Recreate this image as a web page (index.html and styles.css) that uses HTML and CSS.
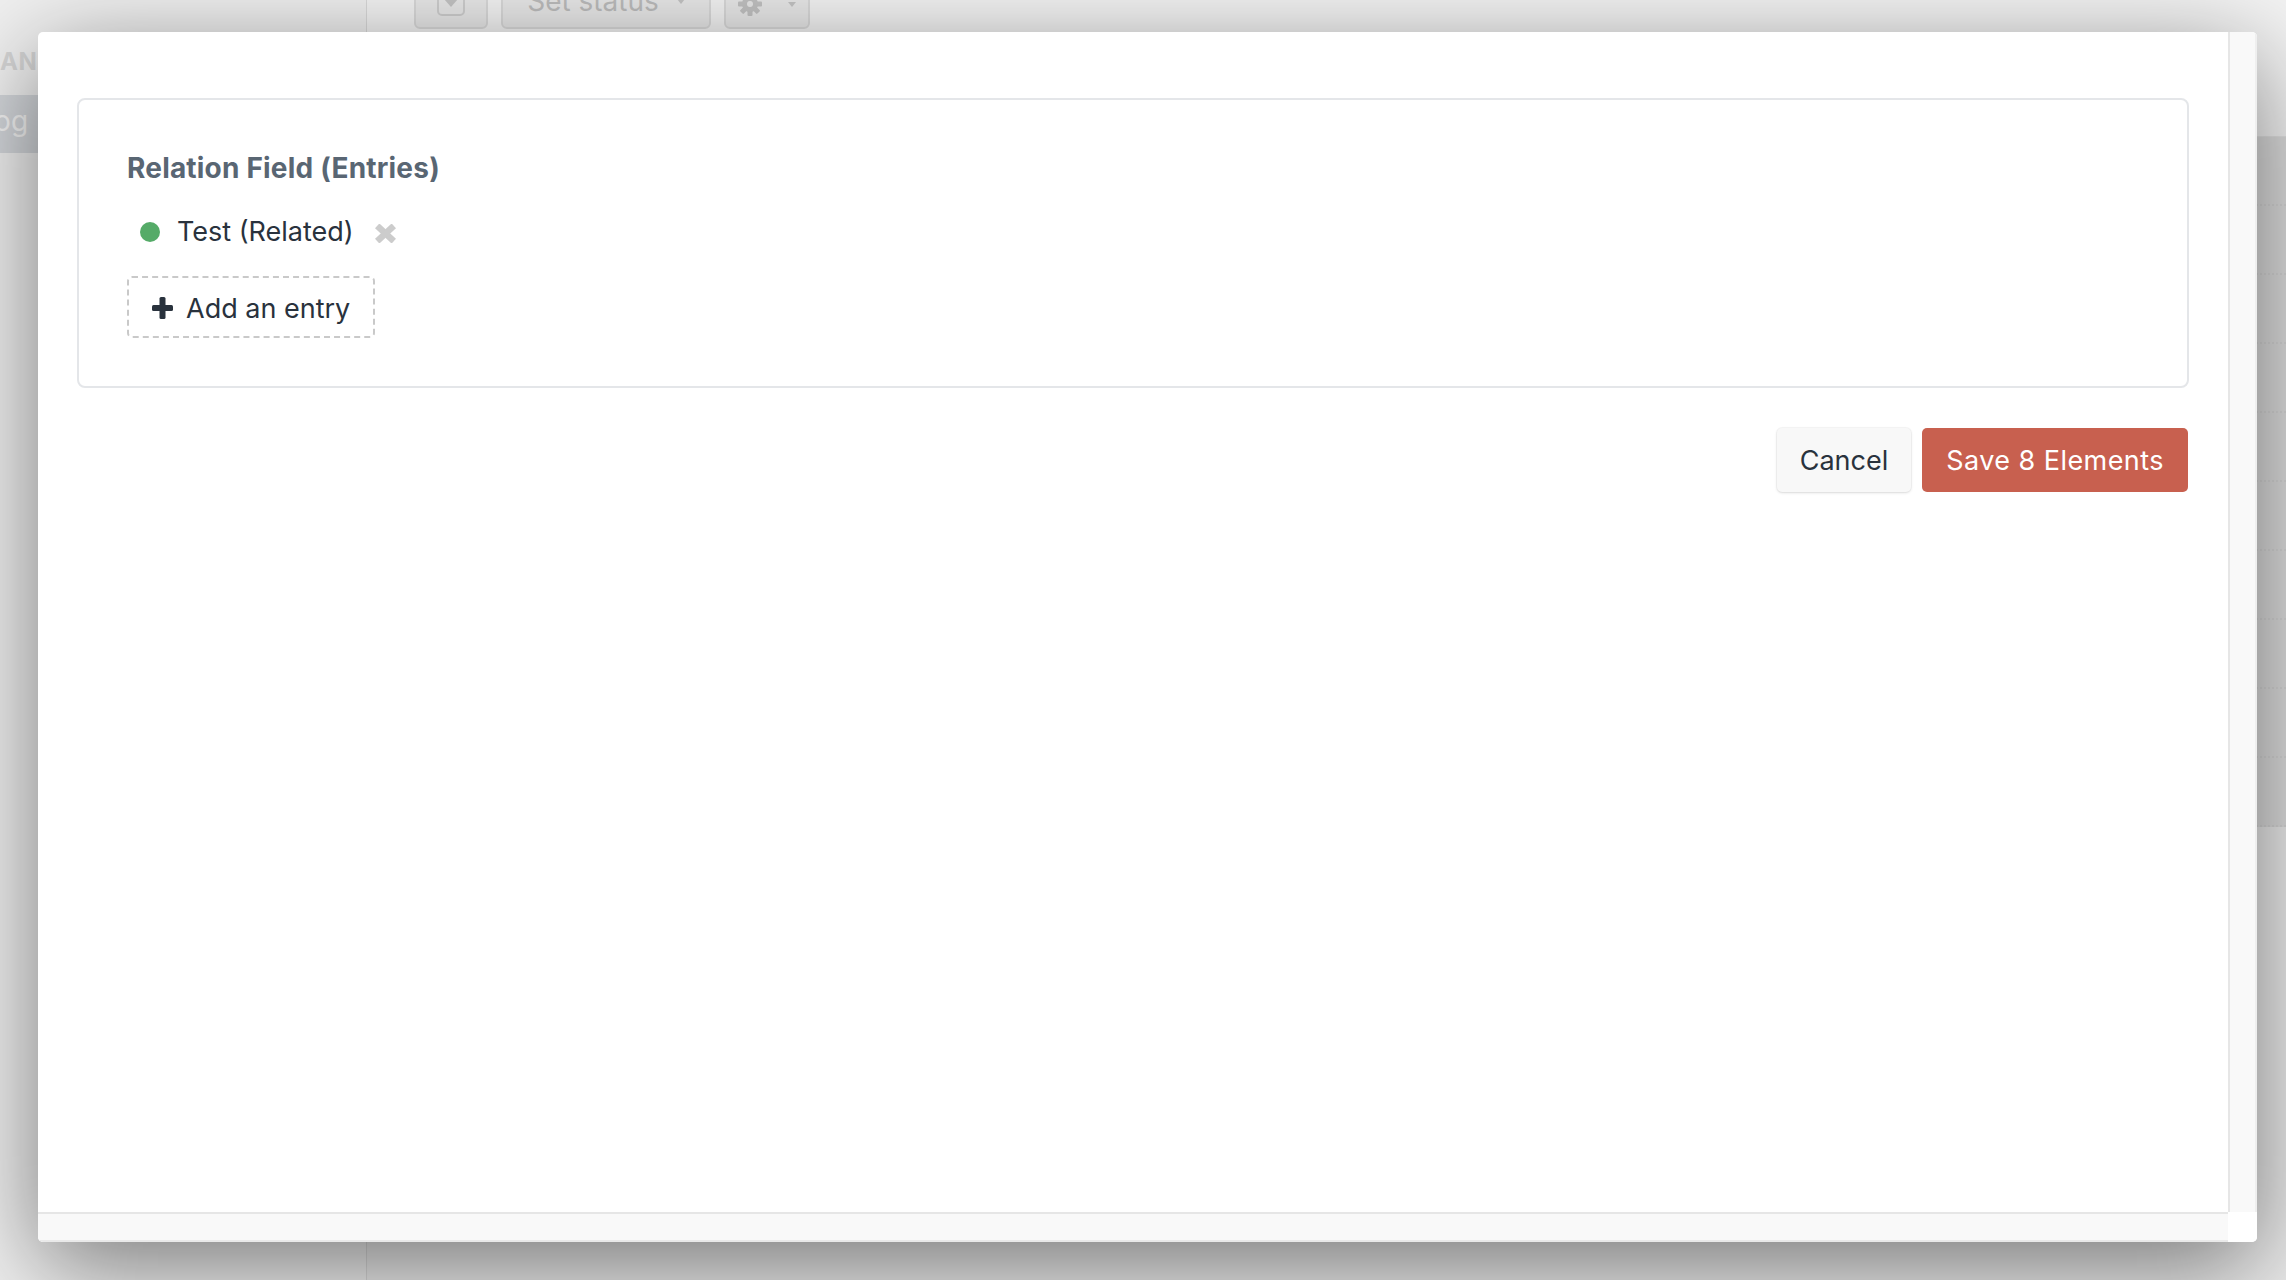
FILE: index.html
```html
<!DOCTYPE html>
<html lang="en">
<head>
<meta charset="utf-8">
<title>Edit elements</title>
<link rel="stylesheet" href="styles.css">
</head>
<body>
<div class="page">
  <aside class="sidebar">
    <div class="sidebar-heading">ANNELS</div>
    <div class="nav-item"><span>Blog</span></div>
  </aside>
  <main class="main">
    <header class="header">
      <div class="toolbar">
        <div class="tb-btn tb-check">
          <svg width="28" height="28" viewBox="0 0 28 28"><rect x="1" y="1" width="26" height="26" rx="4" fill="none" stroke="#cfcfcf" stroke-width="2"/><path d="M7 11 L21 11 L14 19 Z" fill="#c4c4c4"/></svg>
        </div>
        <div class="tb-btn tb-status"><span>Set status</span><span class="caret"></span></div>
        <div class="tb-btn tb-gear">
          <svg width="24" height="24" viewBox="0 0 24 24"><g fill="#c2c2c2"><rect x="9.5" y="0" width="5" height="24" rx="1"/><rect x="0" y="9.5" width="24" height="5" rx="1"/><rect x="9.5" y="0" width="5" height="24" rx="1" transform="rotate(45 12 12)"/><rect x="9.5" y="0" width="5" height="24" rx="1" transform="rotate(-45 12 12)"/><circle cx="12" cy="12" r="8"/></g><circle cx="12" cy="12" r="3" fill="#e9e9e9"/></svg>
          <span class="caret"></span>
        </div>
      </div>
    </header>
    <div class="table">
      <div class="row"></div><div class="row"></div><div class="row"></div><div class="row"></div><div class="row"></div>
      <div class="row"></div><div class="row"></div><div class="row"></div><div class="row"></div><div class="row"></div>
    </div>
  </main>
</div>

<div class="modal">
  <div class="modal-body">
    <section class="field-card">
      <h2 class="field-title">Relation Field (Entries)</h2>
      <div class="element">
        <span class="status-dot"></span>
        <span class="element-label">Test (Related)</span>
        <svg class="remove-icon" width="21" height="19" viewBox="0 0 21 19"><g stroke="#cccccc" stroke-width="6.4" stroke-linecap="butt"><line x1="2.2" y1="1.8" x2="18.8" y2="17.2"/><line x1="18.8" y1="1.8" x2="2.2" y2="17.2"/></g></svg>
      </div>
      <button class="add-btn">
        <svg width="21" height="22" viewBox="0 0 21 22"><rect x="7.5" y="0" width="6" height="22" rx="1.5" fill="#29323d"/><rect x="0" y="8" width="21" height="6" rx="1.5" fill="#29323d"/></svg>
        <span>Add an entry</span>
      </button>
    </section>
    <div class="actions">
      <button class="btn btn-cancel">Cancel</button>
      <button class="btn btn-save">Save 8 Elements</button>
    </div>
  </div>
  <div class="side-strip"></div>
  <div class="footer-strip"></div>
  <div class="corner"></div>
</div>
</body>
</html>
```
FILE: styles.css
```css
html, body {
  margin: 0;
  padding: 0;
}
body {
  width: 2286px;
  height: 1280px;
  overflow: hidden;
  position: relative;
  font-family: Inter, "Noto Sans", Roboto, sans-serif;
  background: #eeeeee;
}

/* ---------- page behind the modal ---------- */
.page {
  display: grid;
  grid-template-columns: 367px 1fr;
  height: 1280px;
}
.sidebar {
  background: #f0f0f0;
  border-right: 1px solid #dadada;
  padding-top: 44px;
  overflow: hidden;
}
.sidebar-heading {
  font-size: 24px;
  line-height: 36px;
  font-weight: 700;
  color: #d6d6d6;
  letter-spacing: 0.5px;
  margin-bottom: 15px;
  white-space: nowrap;
}
.nav-item {
  height: 58px;
  background: #d4d7db;
  color: #f4f4f4;
  font-size: 28px;
  line-height: 52px;
  white-space: nowrap;
}
.nav-item span {
  margin-left: -31px;
}
.main {
  display: flex;
  flex-direction: column;
  background: #ececec;
}
.header {
  height: 137px;
  background: #f4f4f4;
  border-bottom: 1px solid #e4e4e4;
  box-sizing: border-box;
}
.toolbar {
  display: flex;
  gap: 13px;
  margin-top: -35px;
  padding-left: 47px;
}
.tb-btn {
  height: 64px;
  box-sizing: border-box;
  border: 2px solid #dadada;
  border-radius: 6px;
  background: #e9e9e9;
  display: flex;
  align-items: center;
  justify-content: center;
  color: #bdbdbd;
  font-size: 28px;
}
.tb-check { width: 74px; }
.tb-check svg { margin-top: 10px; }
.tb-status {
  width: 210px;
  gap: 18px;
  padding-top: 8px;
}
.tb-gear {
  width: 86px;
  gap: 26px;
  padding-top: 14px;
}
.caret {
  width: 0;
  height: 0;
  border-left: 4px solid transparent;
  border-right: 4px solid transparent;
  border-top: 5px solid #c4c4c4;
}
.table {
  background: #dedede;
}
.row {
  height: 67px;
  border-bottom: 2px dotted #d6d6d6;
}

/* ---------- modal ---------- */
.modal {
  position: absolute;
  left: 38px;
  top: 32px;
  width: 2219px;
  height: 1210px;
  background: #ffffff;
  border-radius: 5px;
  overflow: hidden;
  box-shadow: 0 25px 100px rgba(0, 0, 0, 0.5);
  display: grid;
  grid-template-columns: 1fr 29px;
  grid-template-rows: 1fr 30px;
}
.modal-body {
  padding: 66px 39px 0 39px;
  overflow: hidden;
}
.side-strip {
  background: #f9f9f9;
  border-left: 2px solid #e6e6e6;
  border-right: 2px solid #efefef;
}
.footer-strip {
  background: #f9f9f9;
  border-top: 2px solid #e6e6e6;
  border-bottom: 2px solid #e9e9e9;
}
.corner {
  background: #ffffff;
}

.field-card {
  border: 2px solid #e4e6e9;
  border-radius: 8px;
  padding: 48px;
}
.field-title {
  margin: 0 0 24px;
  font-size: 28px;
  line-height: 40px;
  font-weight: 700;
  letter-spacing: 0.2px;
  color: #596673;
}
.element {
  display: flex;
  align-items: center;
  height: 40px;
  padding-left: 13px;
  margin-bottom: 24px;
  color: #29323d;
  font-size: 27px;
}
.element-label {
  margin-top: -2px;
}
.status-dot {
  width: 20px;
  height: 20px;
  border-radius: 50%;
  background: #55ab68;
  margin-right: 17px;
  flex-shrink: 0;
}
.remove-icon {
  margin-left: 21px;
  margin-top: 3px;
}
.add-btn {
  display: inline-flex;
  align-items: center;
  gap: 13px;
  height: 62px;
  box-sizing: border-box;
  padding: 2px 23px 0 23px;
  border: 2px dashed #c9c9c9;
  border-radius: 5px;
  background: #ffffff;
  font-family: inherit;
  font-size: 27px;
  color: #29323d;
}

.actions {
  display: flex;
  justify-content: flex-end;
  gap: 11px;
  margin-top: 40px;
  padding-right: 1px;
}
.btn {
  height: 64px;
  padding: 0 24px;
  border: 0;
  border-radius: 5px;
  font-family: inherit;
  font-size: 27px;
}
.btn-cancel {
  background: #f8f8f8;
  color: #29323d;
  padding: 0 23px;
  box-shadow: 0 1px 3px rgba(0, 0, 0, 0.12), 0 0 0 1px rgba(0, 0, 0, 0.03);
}
.btn-save {
  background: #c8604f;
  color: #ffffff;
  letter-spacing: 0.45px;
}
```
